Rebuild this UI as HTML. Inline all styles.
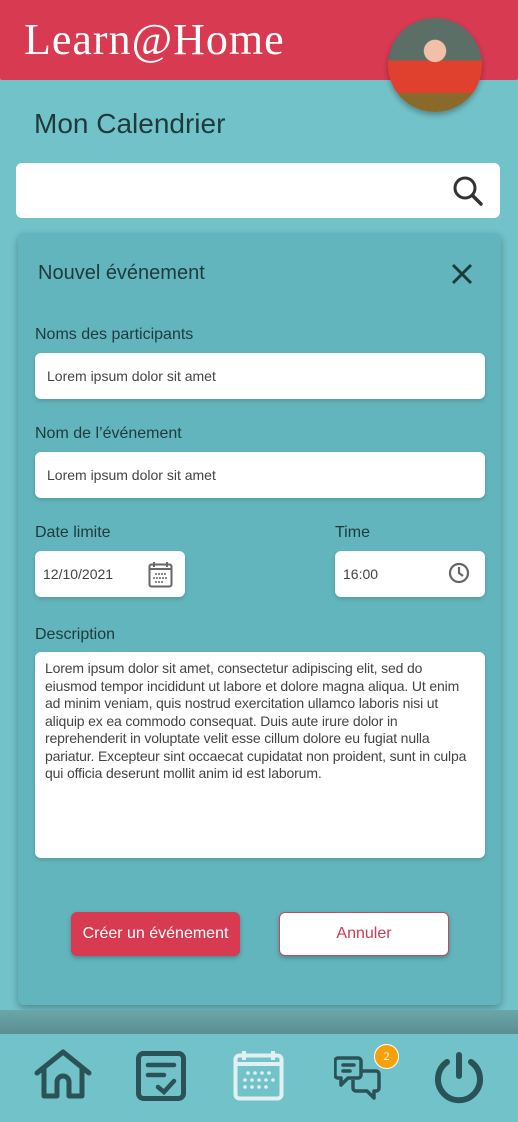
<!DOCTYPE html>
<html><head><meta charset="utf-8"><style>
*{margin:0;padding:0;box-sizing:border-box}
body{width:518px;height:1122px;overflow:hidden;background:#72c3c9;font-family:"Liberation Sans",sans-serif;position:relative;color:#1e3b3f}
.hdr{position:absolute;left:0;top:0;width:518px;height:80px;background:#d83a52;border-radius:0 0 2px 2px}
.logo{position:absolute;left:24px;top:14px;font-family:"Liberation Serif",serif;font-size:44px;color:#fff;letter-spacing:1px}
.av{position:absolute;left:388px;top:18px;width:94px;height:94px;border-radius:50%;background:radial-gradient(circle at 50% 35%,#f0c0a8 0 14%,transparent 15%),linear-gradient(180deg,#5c6f66 0 45%,#e0402e 45% 80%,#8a6a2a 80%);box-shadow:0 3px 6px rgba(0,0,0,.3)}
.title{position:absolute;left:34px;top:108px;font-size:28px;color:#1f3a3d}
.search{position:absolute;left:16px;top:163px;width:484px;height:55px;background:#fff;border-radius:6px}
.modal{position:absolute;left:18px;top:233px;width:483px;height:772px;background:#62b5bc;border-radius:6px;box-shadow:0 3px 8px rgba(0,0,0,.3)}
.lbl{position:absolute;font-size:16px;color:#1f3a3d}
.inp{position:absolute;background:#fff;border-radius:6px;font-size:14px;color:#444;padding-left:12px;display:flex;align-items:center;box-shadow:0 2px 4px rgba(0,0,0,.15)}
.btn{position:absolute;top:912px;height:44px;border-radius:6px;font-size:16px;display:flex;align-items:center;justify-content:center;box-shadow:0 2px 4px rgba(0,0,0,.25)}
.shade{position:absolute;left:0;top:1010px;width:518px;height:24px;background:linear-gradient(#6aa7aa,#5a8e92)}
.nav{position:absolute;left:0;top:1034px;width:518px;height:88px;background:#72c3c9}
</style></head><body>
<div class="hdr"><div class="logo">Learn@Home</div></div>
<div class="av"></div>
<div class="title">Mon Calendrier</div>
<div class="search"><svg style="position:absolute;left:436px;top:12px" width="32" height="32" viewBox="0 0 32 32"><circle cx="13" cy="13" r="10" fill="none" stroke="#333" stroke-width="3"/><line x1="20.5" y1="20.5" x2="29" y2="29" stroke="#333" stroke-width="3.5" stroke-linecap="round"/></svg></div>
<div class="modal"></div>
<div class="lbl" style="left:38px;top:262px;font-size:20px">Nouvel événement</div>
<svg style="position:absolute;left:451px;top:263px" width="22" height="22"><path d="M2 2L20 20M20 2L2 20" stroke="#1f3a3d" stroke-width="3"/></svg>
<div class="lbl" style="left:35px;top:326px">Noms des participants</div>
<div class="inp" style="left:35px;top:353px;width:450px;height:46px">Lorem ipsum dolor sit amet</div>
<div class="lbl" style="left:35px;top:425px">Nom de l’événement</div>
<div class="inp" style="left:35px;top:452px;width:450px;height:46px">Lorem ipsum dolor sit amet</div>
<div class="lbl" style="left:35px;top:524px">Date limite</div>
<div class="inp" style="left:35px;top:551px;width:150px;height:46px;padding-left:8px">12/10/2021</div>
<svg style="position:absolute;left:148px;top:561px" width="25" height="27" viewBox="0 0 25 27"><rect x="1.5" y="3.5" width="22" height="22" rx="2" fill="none" stroke="#666" stroke-width="2"/><line x1="1.5" y1="8" x2="23.5" y2="8" stroke="#666" stroke-width="2"/><path d="M6 1v5M19 1v5" stroke="#666" stroke-width="2"/><g fill="#666"><circle cx="8" cy="13" r="1"/><circle cx="11" cy="13" r="1"/><circle cx="14" cy="13" r="1"/><circle cx="17" cy="13" r="1"/><circle cx="6" cy="17" r="1"/><circle cx="9" cy="17" r="1"/><circle cx="12" cy="17" r="1"/><circle cx="15" cy="17" r="1"/><circle cx="18" cy="17" r="1"/><circle cx="8" cy="21" r="1"/><circle cx="11" cy="21" r="1"/><circle cx="14" cy="21" r="1"/></g></svg>
<div class="lbl" style="left:335px;top:524px">Time</div>
<div class="inp" style="left:335px;top:551px;width:150px;height:46px;padding-left:8px">16:00</div>
<svg style="position:absolute;left:448px;top:562px" width="22" height="22"><circle cx="11" cy="11" r="9" fill="none" stroke="#666" stroke-width="2.2"/><path d="M11 5v6l4 3" fill="none" stroke="#666" stroke-width="2.2"/></svg>
<div class="lbl" style="left:35px;top:626px">Description</div>
<div class="inp" style="left:35px;top:652px;width:450px;height:206px;align-items:flex-start;padding:8px 8px 8px 10px;font-size:14px;line-height:17.5px;color:#444;letter-spacing:-0.15px">Lorem ipsum dolor sit amet, consectetur adipiscing elit, sed do eiusmod tempor incididunt ut labore et dolore magna aliqua. Ut enim ad minim veniam, quis nostrud exercitation ullamco laboris nisi ut aliquip ex ea commodo consequat. Duis aute irure dolor in reprehenderit in voluptate velit esse cillum dolore eu fugiat nulla pariatur. Excepteur sint occaecat cupidatat non proident, sunt in culpa qui officia deserunt mollit anim id est laborum.</div>
<div class="btn" style="left:71px;width:169px;background:#d83a52;color:#fff">Créer un événement</div>
<div class="btn" style="left:279px;width:170px;background:#fff;color:#d03a52;border:1.5px solid #c04a5a">Annuler</div>
<div class="shade"></div>
<div class="nav"></div>
<svg style="position:absolute;left:34px;top:1048px" width="58" height="52" viewBox="0 0 58 52"><path d="M3 25L29 4L55 25M10 20V48H23V34a6 6 0 0 1 12 0V48H48V20" fill="none" stroke="#2a5257" stroke-width="5" stroke-linejoin="round" stroke-linecap="round"/></svg>
<svg style="position:absolute;left:136px;top:1051px" width="50" height="50" viewBox="0 0 50 50"><rect x="2.5" y="2.5" width="45" height="45" rx="5" fill="none" stroke="#2a5257" stroke-width="5"/><path d="M12 14H38M12 24H28M22 36l6 5l10-11" fill="none" stroke="#2a5257" stroke-width="4.5" stroke-linecap="round"/></svg>
<svg style="position:absolute;left:233px;top:1050px" width="51" height="51" viewBox="0 0 51 51"><rect x="2.5" y="5.5" width="46" height="43" rx="4" fill="none" stroke="#e2f0f1" stroke-width="4"/><line x1="2.5" y1="14" x2="48.5" y2="14" stroke="#e2f0f1" stroke-width="4"/><path d="M11 1v9M40 1v9" stroke="#e2f0f1" stroke-width="4"/><g fill="#e2f0f1"><circle cx="15" cy="23" r="1.8"/><circle cx="22" cy="23" r="1.8"/><circle cx="29" cy="23" r="1.8"/><circle cx="36" cy="23" r="1.8"/><circle cx="12" cy="30" r="1.8"/><circle cx="19" cy="30" r="1.8"/><circle cx="26" cy="30" r="1.8"/><circle cx="33" cy="30" r="1.8"/><circle cx="40" cy="30" r="1.8"/><circle cx="12" cy="37" r="1.8"/><circle cx="19" cy="37" r="1.8"/><circle cx="26" cy="37" r="1.8"/><circle cx="33" cy="37" r="1.8"/></g></svg>
<svg style="position:absolute;left:334px;top:1055px" width="50" height="50" viewBox="0 0 50 50"><path d="M4 3H24a3 3 0 0 1 3 3V20a3 3 0 0 1-3 3H14L7 30V23H4a3 3 0 0 1-3-3V6a3 3 0 0 1 3-3Z" fill="none" stroke="#2a5257" stroke-width="3.5" stroke-linejoin="round"/><path d="M9 10H20M9 16H16" stroke="#2a5257" stroke-width="3.5" stroke-linecap="round"/><path d="M27 16H42a3 3 0 0 1 3 3V33a3 3 0 0 1-3 3H40V43L33 36H22a3 3 0 0 1-3-3V25" fill="none" stroke="#2a5257" stroke-width="3.5" stroke-linejoin="round"/></svg>
<div style="position:absolute;left:374px;top:1044px;width:25px;height:25px;border-radius:50%;background:#f5a10a;border:1.5px solid #fff;color:#fff;font-size:12px;font-family:'Liberation Serif',serif;display:flex;align-items:center;justify-content:center">2</div>
<svg style="position:absolute;left:432px;top:1052px" width="54" height="52" viewBox="0 0 54 52"><path d="M15 10A21 21 0 1 0 39 10" fill="none" stroke="#2a5257" stroke-width="6" stroke-linecap="round"/><line x1="27" y1="3" x2="27" y2="24" stroke="#2a5257" stroke-width="6" stroke-linecap="round"/></svg>
</body></html>
